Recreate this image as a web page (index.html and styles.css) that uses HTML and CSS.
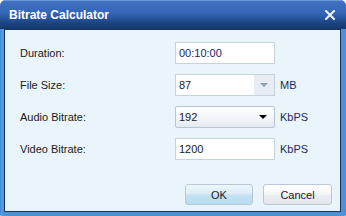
FILE: index.html
```html
<!DOCTYPE html>
<html>
<head>
<meta charset="utf-8">
<link rel="stylesheet" href="styles.css">
</head>
<body>
<div class="window">
  <div class="titlebar">
    <span class="title">Bitrate Calculator</span>
    <svg class="close" width="10" height="10" viewBox="0 0 10 10">
      <path d="M1 1 L9 9 M9 1 L1 9" stroke="#eaf4ff" stroke-width="2" stroke-linecap="square"/>
    </svg>
  </div>
  <div class="frame">
    <div class="panel">
      <div class="form">
        <span class="label">Duration:</span>
        <div class="field"><span class="value navy">00:10:00</span></div>
        <span class="unit"></span>

        <span class="label">File Size:</span>
        <div class="field combo-flat"><span class="value">87</span><span class="drop flat"><span class="tri gray"></span></span></div>
        <span class="unit">MB</span>

        <span class="label">Audio Bitrate:</span>
        <div class="field combo"><span class="value">192</span><span class="drop"><span class="tri"></span></span></div>
        <span class="unit">KbPS</span>

        <span class="label">Video Bitrate:</span>
        <div class="field"><span class="value">1200</span></div>
        <span class="unit">KbPS</span>
      </div>
      <div class="buttons">
        <button class="btn ok">OK</button>
        <button class="btn cancel">Cancel</button>
      </div>
    </div>
  </div>
</div>
</body>
</html>
```
FILE: styles.css
```css
html, body {
  margin: 0;
  padding: 0;
  width: 346px;
  height: 216px;
  overflow: hidden;
  background: #ffffff;
}
.window {
  width: 346px;
  height: 216px;
  box-sizing: border-box;
  display: flex;
  flex-direction: column;
  background: #4e92d6;
  border-radius: 6px 6px 2px 2px;
  font-family: "Liberation Sans", Arial, sans-serif;
  font-size: 11px;
  color: #1a1a1a;
  overflow: hidden;
}
.titlebar {
  height: 29px;
  flex: none;
  display: flex;
  align-items: center;
  justify-content: space-between;
  padding: 0 11px 0 9px;
  background: linear-gradient(#4272c2 0%, #3565b6 45%, #2a57a2 60%, #1b4480 80%, #15386b 100%);
  box-shadow: inset 0 1px 0 #6d9ad8;
}
.title {
  color: #ffffff;
  font-weight: bold;
  font-size: 12px;
  padding-top: 1px;
}
.close {
  display: block;
}
.frame {
  flex: 1;
  display: flex;
  padding: 0 5px 4px 4px;
  background: linear-gradient(90deg, #3f86d2, #56a2e2 2px, #4e92d6 4px);
}
.panel {
  flex: 1;
  display: flex;
  flex-direction: column;
  background: #eaf5fb;
  border: 1px solid #16336c;
  padding: 12px 8px 6px 15px;
}
.form {
  display: grid;
  grid-template-columns: 150px 100px auto;
  column-gap: 5px;
  row-gap: 10px;
  align-items: center;
}
.label {
  color: #1a1a1a;
}
.unit {
  color: #1a2a55;
}
.field {
  height: 22px;
  box-sizing: border-box;
  border: 1px solid #c6d3dd;
  background: #ffffff;
  display: flex;
  align-items: center;
}
.value {
  flex: 1;
  padding-left: 3px;
  color: #1a1a1a;
}
.value.navy {
  color: #1c1c68;
}
.drop {
  width: 20px;
  align-self: stretch;
  display: flex;
  align-items: center;
  justify-content: center;
}
.drop.flat {
  background: #e6eef4;
}
.tri {
  width: 0;
  height: 0;
  border-left: 4px solid transparent;
  border-right: 4px solid transparent;
  border-top: 4px solid #000000;
}
.tri.gray {
  border-top-color: #8aa0b2;
}
.combo {
  border-color: #b8c6d2;
  border-radius: 2px;
  background: linear-gradient(#ffffff 0%, #f6f8fb 45%, #e4eaf1 100%);
}
.combo .drop {
  width: 22px;
}
.buttons {
  margin-top: auto;
  display: flex;
  justify-content: flex-end;
  gap: 10px;
}
.btn {
  height: 21px;
  box-sizing: border-box;
  border: 1px solid #b9c8d4;
  border-radius: 3px;
  font-family: "Liberation Sans", Arial, sans-serif;
  font-size: 11px;
  color: #1a1a1a;
  padding: 0;
  margin: 0;
}
.ok {
  width: 68px;
  background: linear-gradient(#eef7fc 0%, #dcecf7 45%, #c3e2f3 55%, #b8ddf1 100%);
}
.cancel {
  width: 69px;
  background: linear-gradient(#ffffff 0%, #f7f8fa 45%, #eceff4 55%, #e2e6ec 100%);
}
```
